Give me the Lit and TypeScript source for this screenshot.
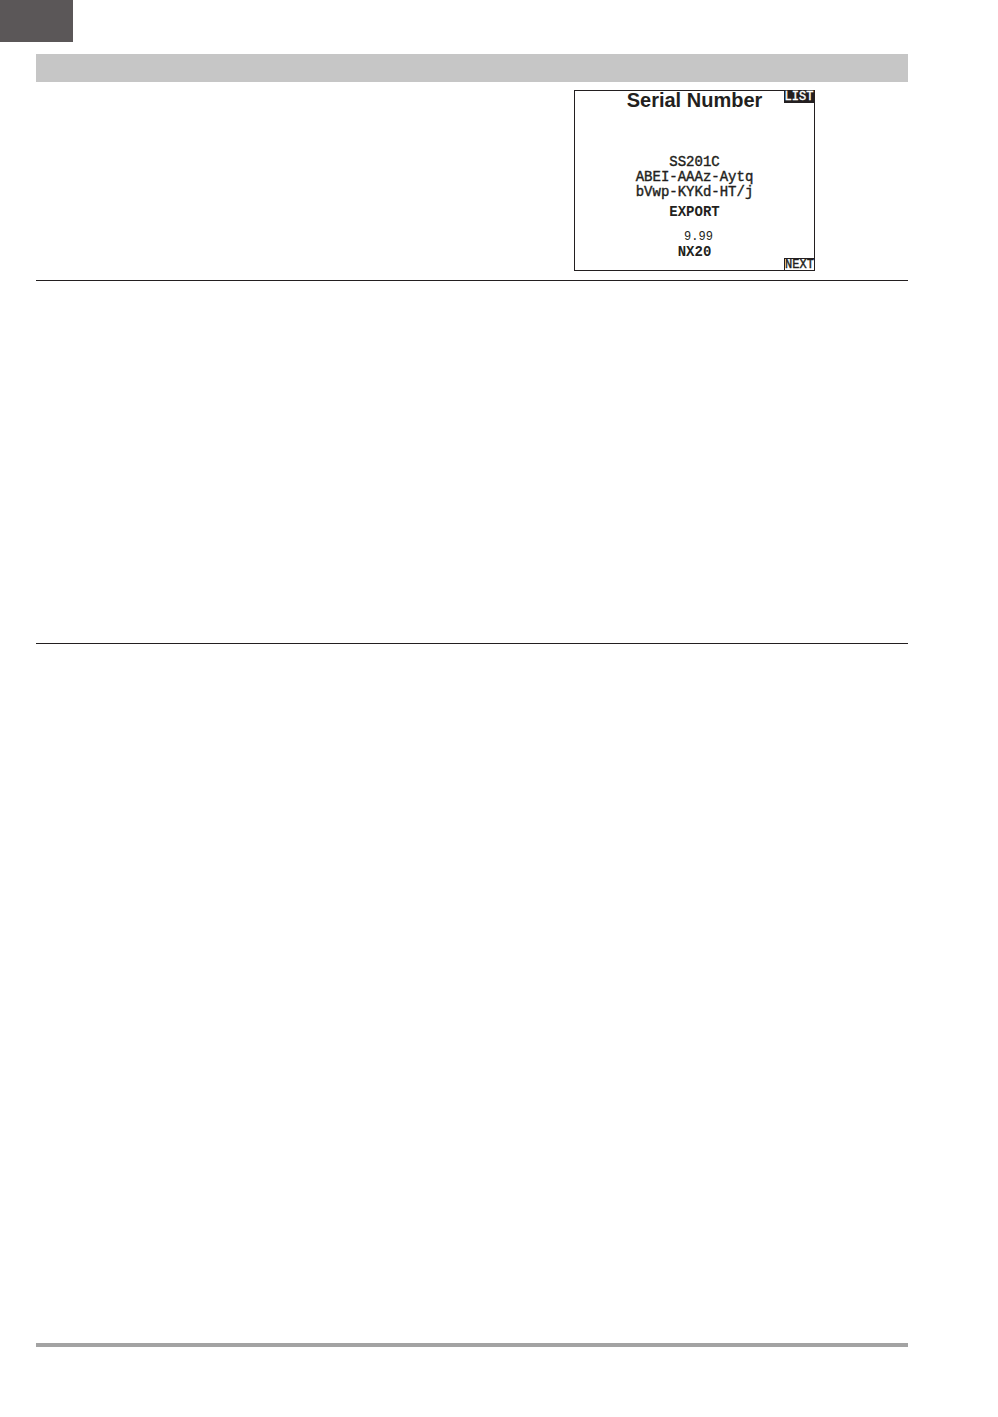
import { LitElement, html, css } from "lit";
import { customElement } from "lit/decorators.js";

@customElement("serial-screen")
class SerialScreen extends LitElement {
  static styles = css`
    :host {
      display: block;
      box-sizing: border-box;
      border: 1px solid #231f20;
      color: #231f20;
      font: 14px/15px "Liberation Mono", monospace;
      text-align: center;
    }
    .row {
      display: grid;
      grid-template-columns: 1fr auto 1fr;
      align-items: start;
    }
    h1 {
      grid-column: 2;
      margin: 0;
      font: bold 20px/18px "Liberation Sans", sans-serif;
    }
    button {
      grid-column: 3;
      justify-self: end;
      box-sizing: border-box;
      width: 30px;
      height: 12px;
      margin: 0;
      padding: 0;
      border: 0;
      border-radius: 0;
      font: 12px/12px "Liberation Mono", monospace;
      -webkit-text-stroke: 0.4px currentColor;
      text-align: center;
    }
    .list {
      background: #231f20;
      color: #fff;
    }
    .next {
      align-self: end;
      border: solid #231f20;
      border-width: 1px 0 0 1px;
      background: #fff;
      color: #231f20;
    }
    p {
      margin: 0;
    }
    .serial {
      padding-top: 46px;
      -webkit-text-stroke: 0.4px #231f20;
    }
    .region {
      padding: 5px 0 10px;
      font-weight: bold;
    }
    .version {
      padding-left: 8px;
      font-size: 12px;
    }
    .model {
      grid-column: 2;
      padding-bottom: 10px;
      font-weight: bold;
    }
  `;

  render() {
    return html`
      <div class="row">
        <h1>Serial Number</h1>
        <button class="list">LIST</button>
      </div>
      <div class="serial">
        <p>SS201C</p>
        <p>ABEI-AAAz-Aytq</p>
        <p>bVwp-KYKd-HT/j</p>
      </div>
      <p class="region">EXPORT</p>
      <p class="version">9.99</p>
      <div class="row">
        <p class="model">NX20</p>
        <button class="next">NEXT</button>
      </div>
    `;
  }
}

@customElement("app-root")
class AppRoot extends LitElement {
  static styles = css`
    :host {
      display: flex;
      flex-direction: column;
      box-sizing: border-box;
      min-height: 100vh;
      padding: 0 90px 70px 36px;
      background: #fff;
    }
    .tab {
      width: 73px;
      height: 42px;
      margin-left: -36px;
      background: #5b5758;
    }
    .heading {
      height: 28px;
      margin-top: 12px;
      background: #c6c6c6;
    }
    .section {
      display: grid;
      grid-template-columns: 538fr 241fr 93fr;
      padding: 8px 0 9px;
      border-bottom: 1px solid #231f20;
    }
    serial-screen {
      grid-column: 2;
    }
    .notes {
      min-height: 362px;
      border-bottom: 1px solid #231f20;
    }
    .body {
      flex: 1;
    }
    .footer {
      height: 4px;
      background: #a3a3a3;
    }
  `;

  render() {
    return html`
      <div class="tab"></div>
      <div class="heading"></div>
      <section class="section"><serial-screen></serial-screen></section>
      <section class="notes"></section>
      <section class="body"></section>
      <div class="footer"></div>
    `;
  }
}
